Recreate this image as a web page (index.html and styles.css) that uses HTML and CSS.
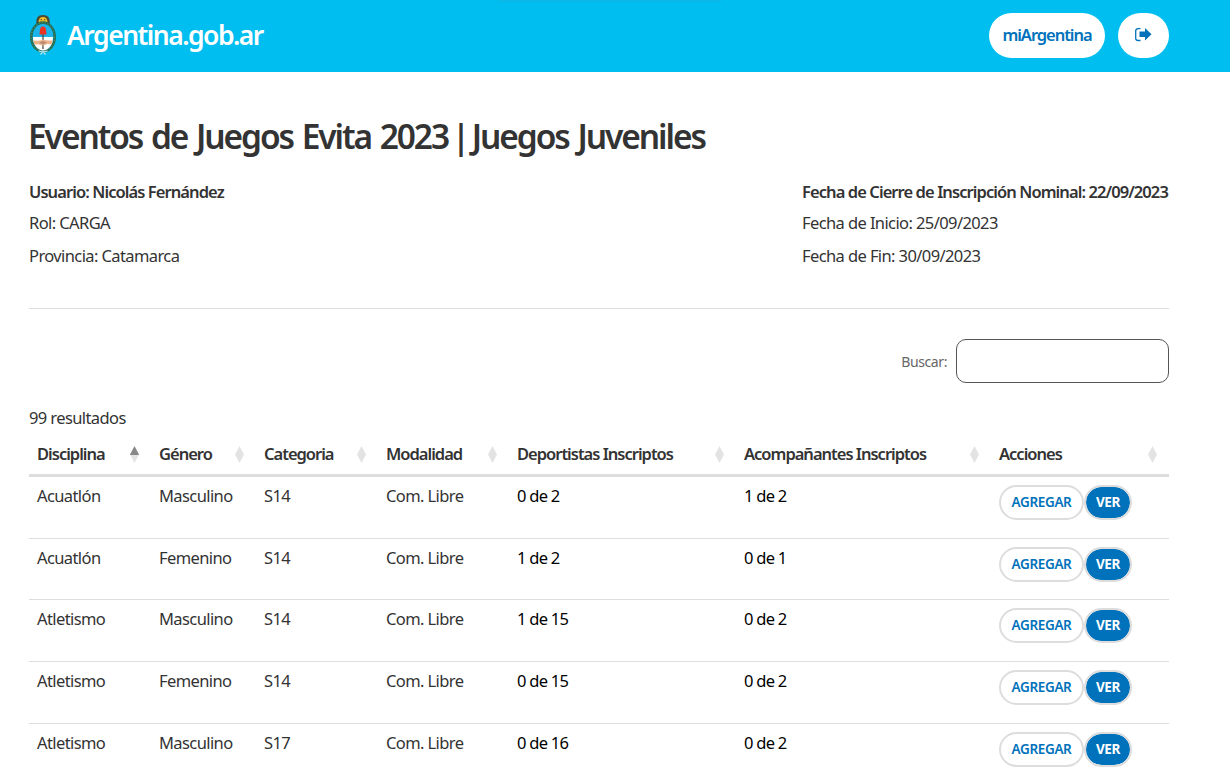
FILE: index.html
```
<!DOCTYPE html>
<html lang="es">
<head>
<meta charset="utf-8">
<title>Eventos de Juegos Evita 2023</title>
<link rel="stylesheet" href="styles.css">
</head>
<body>
<header class="topbar">
  <a class="brand">
    <svg class="crest" viewBox="0 0 28 42" width="28" height="42">
      <path d="M7.500 10.500C6.500 4 9 1 14 1s7.500 3 6.500 9.500z" fill="#4b4a35"/>
      <path d="M9.500 8.500c0-3.500 1.500-5.500 4.500-5.500s4.500 2 4.500 5.500z" fill="#f2c029"/>
      <circle cx="12.300" cy="5.800" r=".7" fill="#4b4a35"/><circle cx="15.700" cy="5.800" r=".7" fill="#4b4a35"/>
      <ellipse cx="14" cy="23" rx="11.700" ry="14.500" fill="none" stroke="#20695f" stroke-width="2.600"/>
      <ellipse cx="14" cy="23" rx="11.700" ry="14.500" fill="none" stroke="#4b8a4c" stroke-width="1.300" stroke-dasharray="1.500 1.500"/>
      <ellipse cx="14" cy="23" rx="10" ry="13" fill="#1cb4ea"/>
      <path d="M4 23h20c0 8-4.500 13.500-10 13.500S4 31 4 23z" fill="#fff"/>
      <path d="M14 18v17" stroke="#4a4038" stroke-width="1.200"/>
      <path d="M4.300 26.500l5 .3 4.700-1 5 .8 4.700-.1-.8 4-4.400-.4-4.500 1.500-4.800-1.400-4 .4z" fill="#edb48c"/>
      <path d="M10 28.500l4-1.500 4 1.500-4 2z" fill="#b98b70"/>
      <path d="M10.500 20.500l.5-5Q11.500 12.500 14 12.500t3 3l.5 5z" fill="#ec3323"/>
      <path d="M9.500 37l4.500 1.200 4.500-1.200M14 37.500l-2.500 3M14 37.500l2.500 3" fill="none" stroke="#b8ebfb" stroke-width="1.200"/>
    </svg>
    <span class="brand-name">Argentina.gob.ar</span>
  </a>
  <span class="loading"></span>
  <nav class="session">
    <a class="pill">miArgentina</a>
    <a class="pill exit"><svg viewBox="0 0 18 16" width="18" height="16"><path d="M6.500 1.700H4.200Q1.700 1.700 1.700 4v7.200q0 2.300 2.500 2.300h2.300" fill="none" stroke="#0072bb" stroke-width="1.300"/><path d="M5.500 4.500h5.500V1l6.500 6.300-6.500 6.300v-3.500H5.500z" fill="#0072bb"/></svg></a>
  </nav>
</header>
<main class="page">
  <h1 class="title">Eventos de Juegos Evita 2023<span class="bar"> | </span>Juegos Juveniles</h1>
  <section class="info">
    <div><p class="strong user">Usuario: Nicolás Fernández</p><p>Rol: CARGA</p><p>Provincia: Catamarca</p></div>
    <div class="dates"><p class="strong">Fecha de Cierre de Inscripción Nominal: 22/09/2023</p><p>Fecha de Inicio: 25/09/2023</p><p>Fecha de Fin: 30/09/2023</p></div>
  </section>
  <div class="search"><label class="search-label" for="q">Buscar:</label><input id="q" class="search-input" type="text"></div>
  <p class="count">99 resultados</p>
  <table class="events">
    <thead><tr class="row head">
      <th>Disciplina<i class="sort asc"></i></th><th>Género<i class="sort"></i></th><th>Categoria<i class="sort"></i></th><th>Modalidad<i class="sort"></i></th><th>Deportistas Inscriptos<i class="sort"></i></th><th>Acompañantes Inscriptos<i class="sort"></i></th><th>Acciones<i class="sort"></i></th>
    </tr></thead>
    <tbody>
      <tr class="row"><td>Acuatlón</td><td>Masculino</td><td>S14</td><td>Com. Libre</td><td class="num">0 de 2</td><td class="num">1 de 2</td><td class="actions"><a class="btn">AGREGAR</a><a class="btn view">VER</a></td></tr>
      <tr class="row"><td>Acuatlón</td><td>Femenino</td><td>S14</td><td>Com. Libre</td><td class="num">1 de 2</td><td class="num">0 de 1</td><td class="actions"><a class="btn">AGREGAR</a><a class="btn view">VER</a></td></tr>
      <tr class="row"><td>Atletismo</td><td>Masculino</td><td>S14</td><td>Com. Libre</td><td class="num">1 de 15</td><td class="num">0 de 2</td><td class="actions"><a class="btn">AGREGAR</a><a class="btn view">VER</a></td></tr>
      <tr class="row"><td>Atletismo</td><td>Femenino</td><td>S14</td><td>Com. Libre</td><td class="num">0 de 15</td><td class="num">0 de 2</td><td class="actions"><a class="btn">AGREGAR</a><a class="btn view">VER</a></td></tr>
      <tr class="row"><td>Atletismo</td><td>Masculino</td><td>S17</td><td>Com. Libre</td><td class="num">0 de 16</td><td class="num">0 de 2</td><td class="actions"><a class="btn">AGREGAR</a><a class="btn view">VER</a></td></tr>
    </tbody>
  </table>
</main>
</body>
</html>
```
FILE: styles.css
```
* { box-sizing: border-box; }
body { margin: 0; height: 768px; overflow: hidden; background: #fff; color: #333; font: 16.5px/24px "Noto Sans", "Open Sans", sans-serif; letter-spacing: -0.6px; }
p, h1 { margin: 0; white-space: nowrap; }
.topbar { height: 72px; background: #00bef0; display: flex; justify-content: space-between; padding: 0 61px 0 29px; }
.brand { display: flex; align-items: flex-start; width: 244px; padding-top: 14px; color: #fff; }
.crest { display: block; }
.brand-name { margin-left: 10px; font-size: 26.5px; line-height: 42px; font-weight: 580; letter-spacing: -1.5px; }
.loading { width: 222px; height: 2px; margin-left: -42px; background: #0bb7e6; }
.session { display: flex; gap: 13px; padding-top: 13px; }
.pill { height: 45px; width: 116px; padding-bottom: 1px; border-radius: 23px; background: #fff; color: #0072bb; font-size: 16.5px; font-weight: 600; letter-spacing: -1.05px; display: flex; align-items: center; justify-content: center; }
.exit { width: 51px; padding: 0 2px 2px 0; }
.page { padding: 0 61px 0 29px; }
.title { padding-top: 42px; margin-left: -1px; font-size: 33.5px; line-height: 44px; font-weight: 600; letter-spacing: -2.07px; word-spacing: 2px; }
.bar { word-spacing: -3px; }
.info { display: flex; justify-content: space-between; height: 151px; padding-top: 22px; border-bottom: 1px solid #ddd; }
.info p { line-height: 33px; }
.info .strong { line-height: 24px; padding-bottom: 2px; }
.strong { font-weight: 600; letter-spacing: -0.92px; }
.dates { width: 367px; }
.search { display: flex; justify-content: flex-end; align-items: center; height: 44px; margin-top: 30px; }
.search-label { font-size: 14px; color: #666; letter-spacing: -0.4px; margin-right: 9px; padding-top: 2px; }
.search-input { width: 213px; height: 44px; border: 1px solid #555; border-radius: 10px; background: #fff; padding: 0 12px; }
.count { margin-top: 23px; }
.events { display: block; }
.events thead, .events tbody { display: block; }
.row { display: grid; grid-template-columns: 122px 105px 122px 131px 227px 255px 178px; height: 61.7px; border-bottom: 1px solid #ddd; }
.row td { padding: 7px 8px 0; }
.row.head { height: 47px; border-bottom: 3px solid #ddd; }
.head th { display: flex; justify-content: space-between; padding: 12px 12px 0 8px; text-align: left; font-weight: 600; letter-spacing: -1px; white-space: nowrap; }
.sort { width: 9px; height: 17px; margin-top: 4px; background: #e3e3e3; clip-path: polygon(50% 0, 100% 50%, 50% 100%, 0 50%); }
.sort.asc { background: linear-gradient(#888 50%, #e3e3e3 50%); }
.row .num { color: #000; letter-spacing: -0.75px; }
.row .actions { display: flex; gap: 2px; padding-top: 8px; }
.btn { width: 85px; height: 35px; border: 2px solid #ddd; border-radius: 18px; color: #0072bb; font-size: 13.5px; line-height: 31px; font-weight: 600; letter-spacing: -0.35px; text-align: center; }
.view { width: 48px; margin-left: -2px; background: #0072bb; background-clip: padding-box; color: #fff; font-weight: 700; }
```
